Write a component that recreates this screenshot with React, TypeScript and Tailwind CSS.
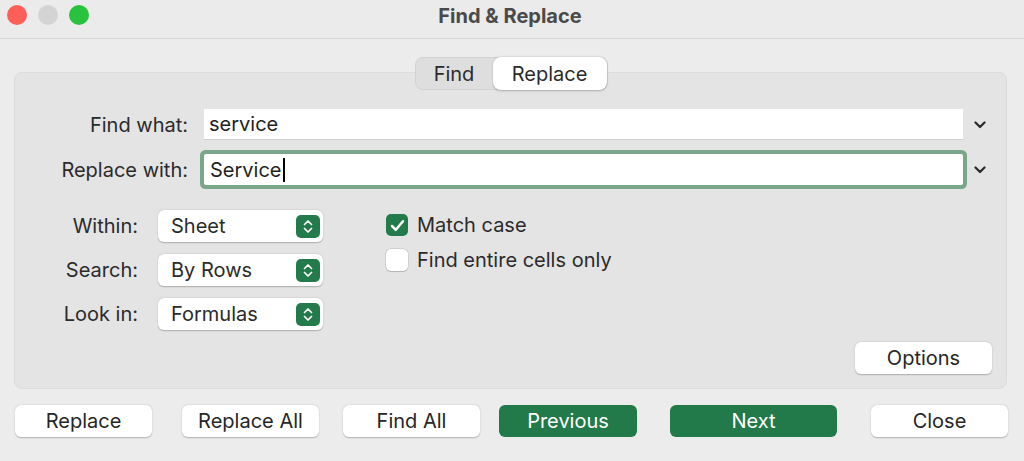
import React from "react";

const font = { fontFamily: "Inter, 'Noto Sans', sans-serif" };

function Chevron() {
  return (
    <svg width="12" height="8" viewBox="0 0 12 8" className="shrink-0">
      <polyline points="1.5,1.5 6,6 10.5,1.5" fill="none" stroke="#2a2a2a" strokeWidth="2.2" strokeLinecap="round" strokeLinejoin="round" />
    </svg>
  );
}

function Stepper() {
  return (
    <div className="w-[24px] h-[23px] rounded-[5px] bg-[#237a4a] flex items-center justify-center">
      <svg width="12" height="17" viewBox="0 0 12 17">
        <polyline points="2.5,6.5 6,3 9.5,6.5" fill="none" stroke="#fff" strokeWidth="1.7" strokeLinecap="round" strokeLinejoin="round" />
        <polyline points="2.5,10.5 6,14 9.5,10.5" fill="none" stroke="#fff" strokeWidth="1.7" strokeLinecap="round" strokeLinejoin="round" />
      </svg>
    </div>
  );
}

function Popup({ label, value }: { label: string; value: string }) {
  return (
    <div className="flex items-center h-[32px]">
      <div className="w-[123px] text-right text-[20px] text-[#2b2b2b]">{label}</div>
      <div className="ml-[20px] w-[165px] h-[32px] bg-white rounded-[6px] shadow-[0_0.5px_1.5px_rgba(0,0,0,0.25)] flex items-center justify-between pl-[13px] pr-[3px]">
        <span className="text-[20px] text-[#2b2b2b]">{value}</span>
        <Stepper />
      </div>
    </div>
  );
}

function Check({ checked, label }: { checked: boolean; label: string }) {
  return (
    <div className="flex items-center h-[22px]">
      {checked ? (
        <div className="w-[22px] h-[22px] rounded-[5px] bg-[#237a4a] flex items-center justify-center">
          <svg width="15" height="13" viewBox="0 0 15 13">
            <polyline points="2,7 5.8,10.8 13,2.2" fill="none" stroke="#fff" strokeWidth="2.5" strokeLinecap="round" strokeLinejoin="round" />
          </svg>
        </div>
      ) : (
        <div className="w-[22px] h-[22px] rounded-[5px] bg-white shadow-[0_0_0_0.5px_rgba(0,0,0,0.15),0_0.5px_1px_rgba(0,0,0,0.15)]" />
      )}
      <span className="ml-[9px] text-[20px] text-[#2b2b2b]">{label}</span>
    </div>
  );
}

function Btn({ label, w, primary, className = "" }: { label: string; w: string; primary?: boolean; className?: string }) {
  return (
    <div
      className={
        (primary
          ? "bg-[#22794a] text-white "
          : "bg-white text-[#262626] shadow-[0_0.5px_1.5px_rgba(0,0,0,0.25)] ") +
        "h-[32px] rounded-[6px] flex items-center justify-center text-[20px] " +
        w +
        " " +
        className
      }
    >
      {label}
    </div>
  );
}

export default function App() {
  return (
    <div className="w-[1024px] h-[461px] bg-[#ececec] flex flex-col overflow-hidden" style={font}>
      {/* title bar */}
      <div className="h-[39px] shrink-0 flex items-center relative border-b border-[#d4d4d4] bg-[#ebebeb]">
        <div className="flex items-center gap-[11px] pl-[7px] -mt-[8px]">
          <div className="w-[20px] h-[20px] rounded-full bg-[#fe5f57]" />
          <div className="w-[20px] h-[20px] rounded-full bg-[#d4d4d4]" />
          <div className="w-[20px] h-[20px] rounded-full bg-[#29c23f]" />
        </div>
        <div className="absolute inset-x-0 top-0 h-[31px] flex items-center justify-center text-[20px] font-bold text-[#4a4a4a] pr-[4px]">
          Find &amp; Replace
        </div>
      </div>

      {/* tabs */}
      <div className="mt-[18px] flex justify-center relative z-10 pr-[2px]">
        <div className="flex h-[33px] rounded-[8px] bg-[#dedede] border border-[#d2d2d2]">
          <div className="w-[77px] flex items-center justify-center text-[20px] text-[#2b2b2b]">Find</div>
          <div className="w-[114px] -my-px bg-white rounded-[8px] shadow-[0_0.5px_2px_rgba(0,0,0,0.25)] flex items-center justify-center text-[20px] text-[#2b2b2b]">
            Replace
          </div>
        </div>
      </div>

      {/* panel */}
      <div className="-mt-[18px] mx-[14px] mr-[17px] h-[317px] rounded-[8px] bg-[#e4e4e4] border border-[#dcdcdc] flex flex-col pt-[36px] pb-[14px] pr-[14px]">
        <div className="flex items-center h-[31px]">
          <div className="w-[174px] text-right text-[20px] text-[#2b2b2b] pr-[1px]">Find what:</div>
          <div className="ml-[15px] w-[759px] h-[31px] bg-white border-b border-[#cfcfcf] flex items-center pl-[5px] text-[20px] text-[#1f1f1f]">
            service
          </div>
          <div className="ml-[11px]">
            <Chevron />
          </div>
        </div>
        <div className="flex items-center h-[31px] mt-[14px]">
          <div className="w-[174px] text-right text-[20px] text-[#2b2b2b] pr-[1px]">Replace with:</div>
          <div className="ml-[15px] w-[759px] h-[31px] bg-white shadow-[0_0_0_4px_#7aa689] rounded-[2px] flex items-center pl-[6px] text-[20px] text-[#1f1f1f]">
            Service
            <span className="inline-block w-[2px] h-[24px] bg-black ml-[1px]" />
          </div>
          <div className="ml-[11px]">
            <Chevron />
          </div>
        </div>

        <div className="flex mt-[25px] flex-1">
          <div className="flex flex-col gap-[12px]">
            <Popup label="Within:" value="Sheet" />
            <Popup label="Search:" value="By Rows" />
            <Popup label="Look in:" value="Formulas" />
          </div>
          <div className="ml-[63px] flex flex-col gap-[13px] pt-[4px]">
            <Check checked label="Match case" />
            <Check checked={false} label="Find entire cells only" />
          </div>
          <div className="flex-1 flex justify-end items-end">
            <Btn label="Options" w="w-[137px]" />
          </div>
        </div>
      </div>

      {/* bottom buttons */}
      <div className="flex mt-[16px] pl-[15px]">
        <Btn label="Replace" w="w-[137px]" />
        <Btn label="Replace All" w="w-[137px]" className="ml-[30px]" />
        <Btn label="Find All" w="w-[137px]" className="ml-[24px]" />
        <Btn label="Previous" w="w-[138px]" primary className="ml-[19px]" />
        <Btn label="Next" w="w-[167px]" primary className="ml-[33px]" />
        <Btn label="Close" w="w-[137px]" className="ml-[34px]" />
      </div>
    </div>
  );
}
